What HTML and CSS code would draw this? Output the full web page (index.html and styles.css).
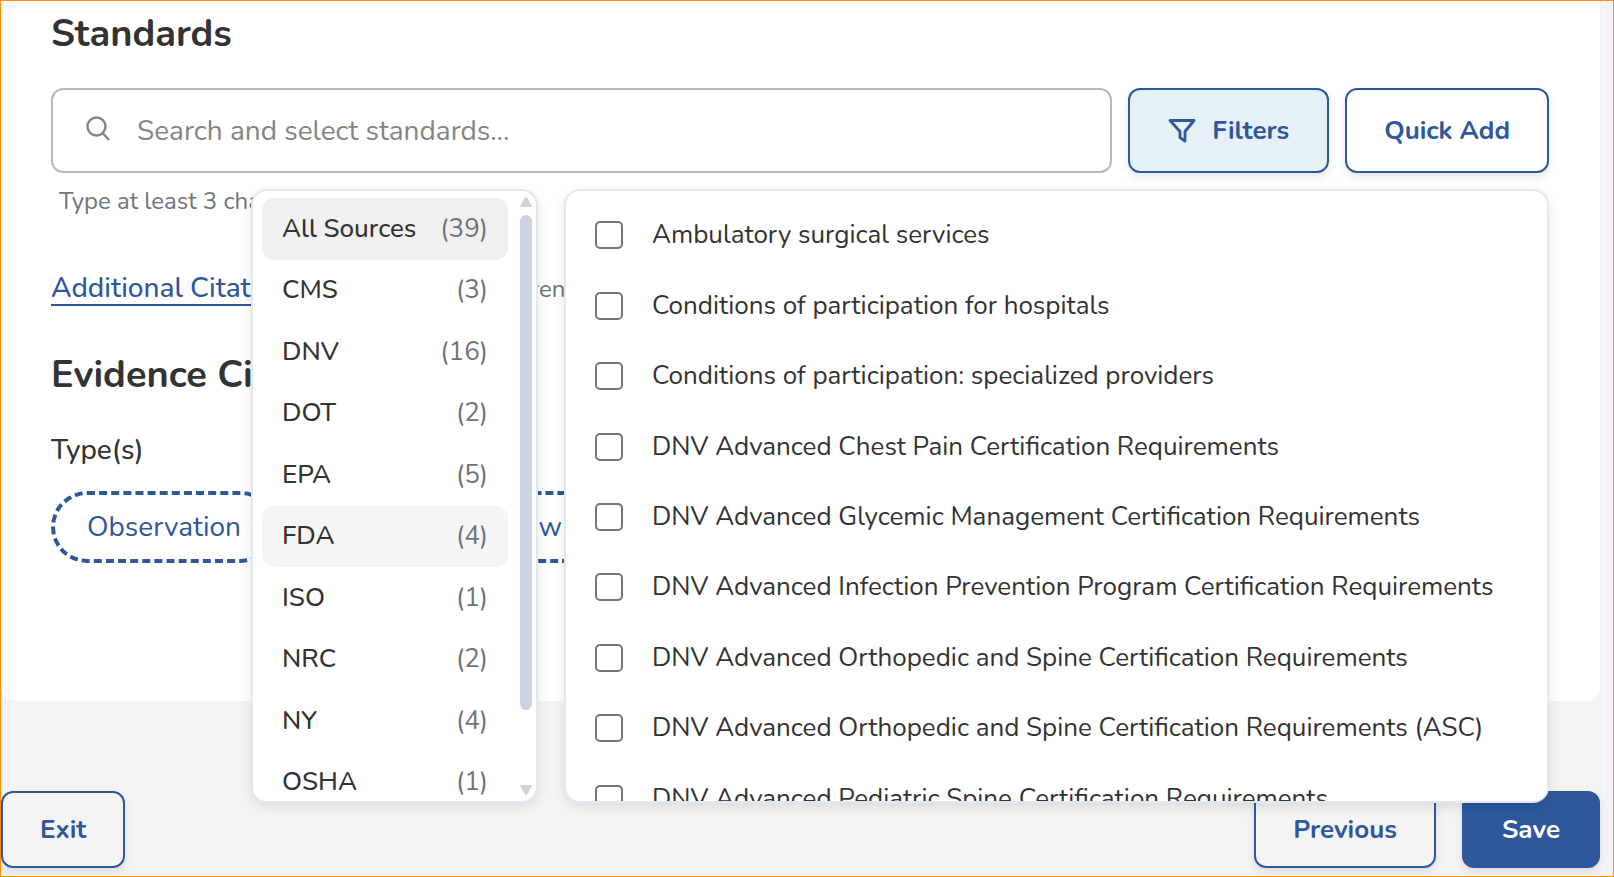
FILE: index.html
```html
<!DOCTYPE html>
<html lang="en">
<head>
<meta charset="utf-8">
<title>Standards</title>
<link rel="stylesheet" href="styles.css">
</head>
<body>
<div class="page">
  <main class="card">
    <h2 class="heading">Standards</h2>
    <div class="toolbar">
      <label class="search">
        <svg class="search-icon" viewBox="0 0 24 25" width="24" height="25" fill="none" stroke="currentColor" stroke-width="2.400" aria-hidden="true"><circle cx="10.500" cy="10.500" r="9"/><path d="M16.500 17 23 24"/></svg>
        <input class="search-input" type="text" placeholder="Search and select standards..." aria-label="Search standards">
      </label>
      <button class="btn btn-tall btn-active" type="button">
        <svg class="filter-icon" viewBox="0 0 28 24" width="28" height="24" fill="none" stroke="currentColor" stroke-width="2.800" stroke-linejoin="round" aria-hidden="true"><path d="M2 1.500h24l-9 11V22l-5-3.500v-6Z"/></svg>
        Filters
      </button>
      <button class="btn btn-tall" type="button">Quick Add</button>

      <div class="panel sources">
        <ul class="source-list">
          <li><button class="source is-selected" type="button"><span>All Sources</span><span class="count">(39)</span></button></li>
          <li><button class="source" type="button"><span>CMS</span><span class="count">(3)</span></button></li>
          <li><button class="source" type="button"><span>DNV</span><span class="count">(16)</span></button></li>
          <li><button class="source" type="button"><span>DOT</span><span class="count">(2)</span></button></li>
          <li><button class="source" type="button"><span>EPA</span><span class="count">(5)</span></button></li>
          <li><button class="source is-hovered" type="button"><span>FDA</span><span class="count">(4)</span></button></li>
          <li><button class="source" type="button"><span>ISO</span><span class="count">(1)</span></button></li>
          <li><button class="source" type="button"><span>NRC</span><span class="count">(2)</span></button></li>
          <li><button class="source" type="button"><span>NY</span><span class="count">(4)</span></button></li>
          <li><button class="source" type="button"><span>OSHA</span><span class="count">(1)</span></button></li>
        </ul>
        <div class="scrollbar" aria-hidden="true">
          <svg viewBox="0 0 12 10" width="12" height="10"><path d="M6 1 11 9H1Z" fill="currentColor" stroke="currentColor" stroke-width="2" stroke-linejoin="round"/></svg>
          <div class="scroll-track"><div class="scroll-thumb"></div></div>
          <svg viewBox="0 0 12 10" width="12" height="10"><path d="M1 1h10L6 9Z" fill="currentColor" stroke="currentColor" stroke-width="2" stroke-linejoin="round"/></svg>
        </div>
      </div>

      <div class="panel topics">
        <div class="topic-list">
          <label class="topic"><input class="tick" type="checkbox">Ambulatory surgical services</label>
          <label class="topic"><input class="tick" type="checkbox">Conditions of participation for hospitals</label>
          <label class="topic"><input class="tick" type="checkbox">Conditions of participation: specialized providers</label>
          <label class="topic"><input class="tick" type="checkbox">DNV Advanced Chest Pain Certification Requirements</label>
          <label class="topic"><input class="tick" type="checkbox">DNV Advanced Glycemic Management Certification Requirements</label>
          <label class="topic"><input class="tick" type="checkbox">DNV Advanced Infection Prevention Program Certification Requirements</label>
          <label class="topic"><input class="tick" type="checkbox">DNV Advanced Orthopedic and Spine Certification Requirements</label>
          <label class="topic"><input class="tick" type="checkbox">DNV Advanced Orthopedic and Spine Certification Requirements (ASC)</label>
          <label class="topic"><input class="tick" type="checkbox">DNV Advanced Pediatric Spine Certification Requirements</label>
        </div>
      </div>
    </div>
    <p class="hint">Type at least 3 characters</p>
    <div class="citation-row">
      <a class="link" href="#citations">Additional Citations</a>
      <span class="note">for additional references</span>
    </div>
    <h2 class="heading">Evidence Citation</h2>
    <p class="field-label">Type(s)</p>
    <div class="pills">
      <button class="pill" type="button">Observation</button>
      <button class="pill" type="button">Document Review</button>
    </div>
  </main>
  <footer class="footer">
    <button class="btn" type="button">Exit</button>
    <div class="footer-end">
      <button class="btn" type="button">Previous</button>
      <button class="btn btn-primary" type="button">Save</button>
    </div>
  </footer>
</div>
</body>
</html>
```
FILE: styles.css
```css
* { box-sizing: border-box; }

:root {
  --blue: #2f579c;
  --ink: #333;
  --muted: #6c757d;
  --line: #e2e8f0;
  --thumb: #cdd3e0;
}

body {
  margin: 0;
  font-family: Nunito, Lato, sans-serif;
  font-size: 26px;
  line-height: 36px;
  color: var(--ink);
  background: #f4f4f4;
}

button, input { font: inherit; color: inherit; }
p, h2, ul { margin: 0; padding: 0; }
ul { list-style: none; }

.page {
  min-height: 100vh;
  padding-right: 13px;
  padding-bottom: 8px;
  border: 1px solid #ff8c0a;
  display: flex;
  flex-direction: column;
  justify-content: space-between;
  overflow: hidden;
}

.card {
  background: #fff;
  border-radius: 0 0 14px 14px;
  padding: 7px 51px 138px 50px;
}

.heading {
  font-size: 38px;
  line-height: 52px;
  font-weight: 700;
}

.toolbar {
  position: relative;
  display: flex;
  gap: 16px;
  margin-top: 28px;
}

.search {
  flex: 1;
  display: flex;
  align-items: center;
  gap: 27px;
  padding: 0 33px;
  border: 2px solid #b9b9b9;
  border-radius: 12px;
}
.search-icon { color: #858585; margin-bottom: 4px; }
.search-input {
  flex: 1;
  min-width: 0;
  border: 0;
  padding: 0;
  outline: 0;
  background: none;
  font-size: 28px;
}
.search-input::placeholder { color: #858585; opacity: 1; }

.btn {
  height: 77px;
  padding: 0 37px;
  display: flex;
  align-items: center;
  justify-content: center;
  gap: 16px;
  font-weight: 700;
  color: var(--blue);
  background: transparent;
  border: 2px solid var(--blue);
  border-radius: 12px;
  box-shadow: 0 4px 8px rgba(0, 0, 0, .1);
}
.btn-tall { height: 85px; background: #fff; }
.btn-active { padding: 0 38px; background: #e5f0f7; }
.btn-primary { padding: 0 38px; background: var(--blue); color: #fff; }

.panel {
  position: absolute;
  top: 101px;
  height: 614px;
  overflow: hidden;
  background: #fff;
  border: 2px solid var(--line);
  border-radius: 16px;
  box-shadow: 0 4px 12px rgba(0, 0, 0, .1);
}
.sources { left: 200px; width: 287px; }
.topics { left: 513px; right: 0; }

.source-list {
  height: 631px;
  padding: 7px 28px 9px 9px;
  display: grid;
  grid-auto-rows: 1fr;
}
.source {
  width: 100%;
  height: 100%;
  padding: 0 20px;
  display: flex;
  align-items: center;
  justify-content: space-between;
  border: 0;
  border-radius: 12px;
  background: none;
  font-weight: 500;
}
.is-selected { background: #f0f0f0; }
.is-hovered { background: #f5f5f5; }
.count { color: var(--muted); font-weight: 400; }

.scrollbar {
  position: absolute;
  top: 6px;
  right: 4px;
  bottom: 6px;
  width: 12px;
  display: flex;
  flex-direction: column;
  gap: 8px;
  color: var(--thumb);
}
.scroll-track { flex: 1; }
.scroll-thumb {
  height: 88%;
  border-radius: 6px;
  background: var(--thumb);
}

.topic-list {
  height: 650px;
  padding: 9px 29px 7px;
  display: grid;
  grid-auto-rows: 1fr;
}
.topic {
  display: flex;
  align-items: center;
  gap: 29px;
  white-space: nowrap;
}
.tick {
  appearance: none;
  flex: none;
  width: 28px;
  height: 28px;
  margin: 0;
  border: 2px solid #767676;
  border-radius: 5px;
  background: #fff;
}

.hint {
  margin: 10px 0 0 8px;
  font-size: 24px;
  color: var(--muted);
}

.citation-row {
  margin-top: 52px;
  display: flex;
  gap: 37px;
  align-items: baseline;
}
.link {
  font-size: 28px;
  line-height: 32px;
  color: var(--blue);
  text-decoration: none;
  border-bottom: 2px solid var(--blue);
  font-weight: 500;
}
.note { font-size: 24px; color: var(--muted); }
.citation-row + .heading { margin-top: 42px; }

.field-label {
  margin-top: 31px;
  font-size: 28px;
  font-weight: 500;
}

.pills {
  display: flex;
  gap: 18px;
  margin-top: 23px;
}
.pill {
  height: 72px;
  padding: 0 32px;
  border: 4px dashed var(--blue);
  border-radius: 36px;
  background: #fff;
  color: var(--blue);
  font-size: 28px;
  white-space: nowrap;
}
.pill + .pill { padding: 0 34px; }

.footer, .footer-end { display: flex; }
.footer { justify-content: space-between; }
.footer-end { gap: 26px; }
```
